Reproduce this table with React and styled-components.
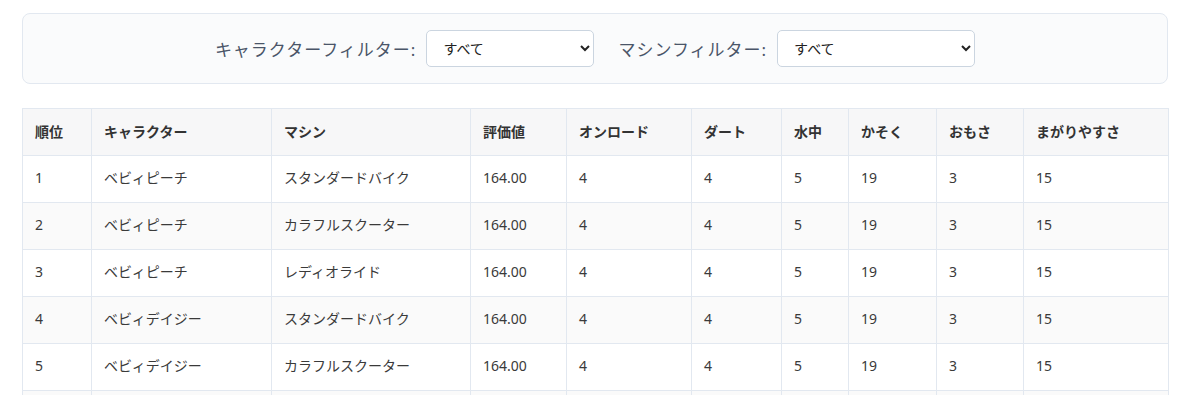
import React from "react";
import styled, { createGlobalStyle } from "styled-components";

const Global = createGlobalStyle`
  html, body { margin: 0; padding: 0; background: #ffffff; }
  body {
    font-family: "Noto Sans", "Noto Sans CJK JP", sans-serif;
    color: #333333;
  }
`;

const Page = styled.div`
  padding: 13px 22px 0;
`;

const FilterPanel = styled.div`
  display: flex;
  justify-content: center;
  align-items: center;
  gap: 24px;
  padding: 16px;
  background: #fafbfc;
  border: 1px solid #e2e8f0;
  border-radius: 8px;
`;

const FilterGroup = styled.label`
  display: flex;
  align-items: center;
  gap: 10px;
  font-size: 17px;
  letter-spacing: 1px;
  color: #4a5568;
`;

const Select = styled.select`
  width: ${(p) => p.$w}px;
  height: 37px;
  padding: 0 12px;
  font-family: "Noto Sans", "Noto Sans CJK JP", sans-serif;
  font-size: 14px;
  letter-spacing: 0;
  color: #222;
  background: #ffffff;
  border: 1px solid #cbd5e0;
  border-radius: 5px;
`;

const Table = styled.table`
  margin-top: 24px;
  width: 100%;
  border-collapse: collapse;
  table-layout: fixed;
  border: 1px solid #e2e8f0;
  font-size: 14px;
`;

const Th = styled.th`
  text-align: left;
  font-weight: 700;
  color: #333;
  background: #f7f7f8;
  padding: 12px 12px;
  line-height: 22px;
  border: 1px solid #e2e8f0;
`;

const Tr = styled.tr`
  background: ${(p) => (p.$striped ? "#fafafa" : "#ffffff")};
`;

const Td = styled.td`
  padding: 11px 12px 13px;
  line-height: 22px;
  color: #3a3a3a;
  border: 1px solid #e2e8f0;
  white-space: nowrap;
`;

const columns = [
  ["順位", 69],
  ["キャラクター", 180],
  ["マシン", 199],
  ["評価値", 96],
  ["オンロード", 125],
  ["ダート", 90],
  ["水中", 67],
  ["かそく", 88],
  ["おもさ", 87],
  ["まがりやすさ", 145],
];

const rows = [
  [1, "ベビィピーチ", "スタンダードバイク"],
  [2, "ベビィピーチ", "カラフルスクーター"],
  [3, "ベビィピーチ", "レディオライド"],
  [4, "ベビィデイジー", "スタンダードバイク"],
  [5, "ベビィデイジー", "カラフルスクーター"],
  [6, "ベビィデイジー", "レディオライド"],
];

export default function App() {
  return (
    <>
      <Global />
      <Page>
        <FilterPanel>
          <FilterGroup>
            キャラクターフィルター:
            <Select $w={168} defaultValue="all">
              <option value="all">すべて</option>
            </Select>
          </FilterGroup>
          <FilterGroup>
            マシンフィルター:
            <Select $w={198} defaultValue="all">
              <option value="all">すべて</option>
            </Select>
          </FilterGroup>
        </FilterPanel>
        <Table>
          <colgroup>
            {columns.map(([n, w]) => (
              <col key={n} style={{ width: w }} />
            ))}
          </colgroup>
          <thead>
            <tr>
              {columns.map(([n]) => (
                <Th key={n}>{n}</Th>
              ))}
            </tr>
          </thead>
          <tbody>
            {rows.map(([rank, ch, ma], i) => (
              <Tr key={rank} $striped={i % 2 === 1}>
                <Td>{rank}</Td>
                <Td>{ch}</Td>
                <Td>{ma}</Td>
                <Td>164.00</Td>
                <Td>4</Td>
                <Td>4</Td>
                <Td>5</Td>
                <Td>19</Td>
                <Td>3</Td>
                <Td>15</Td>
              </Tr>
            ))}
          </tbody>
        </Table>
      </Page>
    </>
  );
}
